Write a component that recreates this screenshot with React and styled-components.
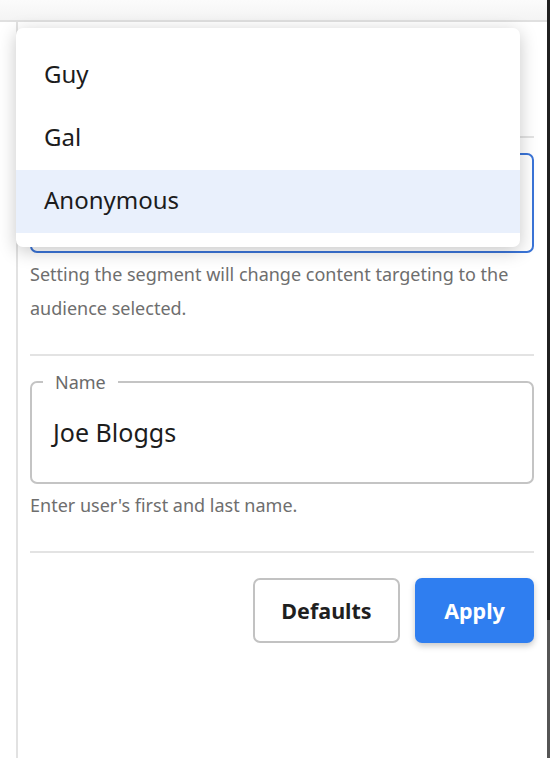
import styled, { createGlobalStyle } from 'styled-components';

const GlobalStyle = createGlobalStyle`
  html, body {
    margin: 0;
    padding: 0;
    background: #ffffff;
  }
  body {
    font-family: 'Noto Sans', 'Open Sans', sans-serif;
    color: #1f1f1f;
  }
`;

const segments = ['Guy', 'Gal', 'Anonymous'];

// Settings drawer with the segment menu opened over it
const App = () => {
  return (
    <Page>
      <GlobalStyle />
      <TopBar />
      <Body>
        <Panel>
          <Intro />
          <Divider />
          <Select />
          <Helper>Setting the segment will change content targeting to the audience selected.</Helper>
          <Divider spaced />
          <Field>
            <Legend>Name</Legend>
            <Value>Joe Bloggs</Value>
          </Field>
          <Helper>Enter user's first and last name.</Helper>
          <Divider spaced />
          <Actions>
            <Button>Defaults</Button>
            <Button primary>Apply</Button>
          </Actions>
        </Panel>
        <Edge />
      </Body>
      <Menu>
        {segments.map((s) => (
          <MenuItem key={s} active={s === 'Anonymous'}>
            {s}
          </MenuItem>
        ))}
      </Menu>
    </Page>
  );
};

const Page = styled.div`
  position: relative;
  height: 758px;
  display: flex;
  flex-direction: column;
  overflow: hidden;
`;

const TopBar = styled.div`
  height: 20px;
  flex-shrink: 0;
  background: linear-gradient(#fbfbfb, #f4f4f4);
  border-bottom: 2px solid #e0e0e0;
  margin-right: 3px;
`;

const Body = styled.div`
  flex: 1;
  display: flex;
  padding-left: 16px;
`;

const Panel = styled.div`
  flex: 1;
  display: flex;
  flex-direction: column;
  border-left: 2px solid #e2e2e2;
  padding: 0 13px 0 12px;
`;

const Edge = styled.div`
  width: 3px;
  margin-top: -22px;
  background: linear-gradient(#202020 0, #202020 620px, #555 620px);
`;

const Intro = styled.div`
  height: 114px;
`;

const Divider = styled.div`
  height: 2px;
  background: #e3e3e3;
  margin: ${(p) => (p.spaced ? '29px 0 0' : '0')};
`;

const Select = styled.div`
  margin-top: 15px;
  height: 96px;
  border: 2px solid #3a74d8;
  border-radius: 7px;
`;

const Helper = styled.p`
  margin: 4px 0 0;
  font-size: 18px;
  line-height: 34px;
  color: #6e6e6e;
`;

const Field = styled.fieldset`
  margin: 15px 0 0;
  padding: 0 0 35px;
  border: 2px solid #c4c4c4;
  border-radius: 7px;
  min-width: 0;
`;

const Legend = styled.legend`
  margin-left: 11px;
  padding: 0 12px;
  font-size: 18px;
  line-height: 22px;
  color: #6a6a6a;
`;

const Value = styled.div`
  margin-top: 24px;
  padding-left: 21px;
  font-size: 25px;
  line-height: 30px;
  color: #1c1c1c;
`;

const Actions = styled.div`
  display: flex;
  justify-content: flex-end;
  gap: 15px;
  margin-top: 25px;
`;

const Button = styled.button`
  height: 65px;
  padding: 0 26px;
  min-width: ${(p) => (p.primary ? '119px' : '147px')};
  font-family: 'Noto Sans', sans-serif;
  font-size: 21.5px;
  font-weight: 700;
  border-radius: 7px;
  border: ${(p) => (p.primary ? 'none' : '2px solid #c2c2c2')};
  background: ${(p) => (p.primary ? '#2f7ef0' : '#ffffff')};
  color: ${(p) => (p.primary ? '#ffffff' : '#1f1f1f')};
  box-shadow: ${(p) => (p.primary ? '0 3px 6px rgba(0, 0, 0, 0.22)' : 'none')};
`;

const Menu = styled.div`
  position: absolute;
  top: 28px;
  left: 16px;
  width: 504px;
  padding: 16px 0 14px;
  background: #ffffff;
  border-radius: 7px;
  box-shadow: 0 4px 18px rgba(0, 0, 0, 0.22);
`;

const MenuItem = styled.div`
  height: 63px;
  box-sizing: border-box;
  padding: 0 0 4px 28px;
  display: flex;
  align-items: center;
  font-size: 24px;
  color: #1c1c1c;
  background: ${(p) => (p.active ? '#e9f0fc' : 'transparent')};
`;

export default App;
